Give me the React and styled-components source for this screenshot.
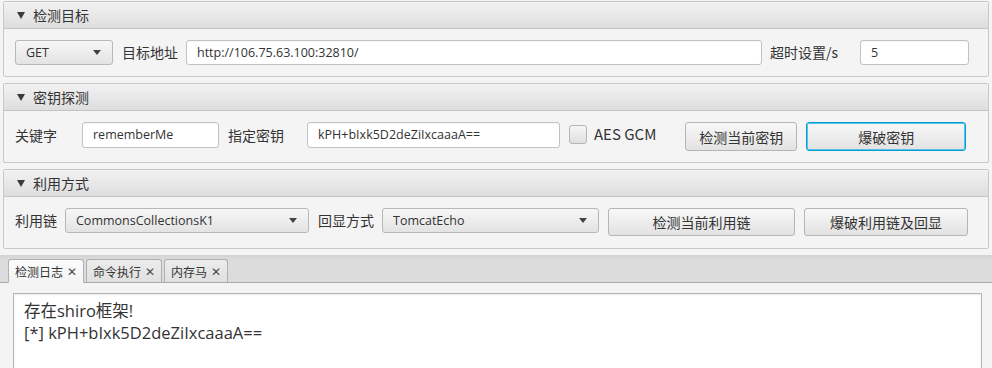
import React from "react";
import styled, { createGlobalStyle } from "styled-components";

const Global = createGlobalStyle`
  html, body { margin: 0; padding: 0; background: #f4f4f4; }
  body { font-family: "Noto Sans CJK SC", "Noto Sans", sans-serif; font-size: 14px; color: #333; }
  * { box-sizing: border-box; }
`;

const latin = `"Open Sans", "Noto Sans CJK SC", sans-serif`;

const Page = styled.div`
  width: 992px;
  height: 368px;
  overflow: hidden;
  display: flex;
  flex-direction: column;
  background: #f4f4f4;
`;

const Sections = styled.div`
  display: flex;
  flex-direction: column;
  gap: 6px;
  padding: 1px 3px 0 3px;
`;

const Pane = styled.section`
  border: 1px solid #c8c8c8;
  border-radius: 2px;
  background: #f4f4f4;
`;

const TitleBar = styled.div`
  height: 27px;
  display: flex;
  align-items: center;
  padding-left: 13px;
  gap: 8px;
  background: linear-gradient(to bottom, #f2f2f2, #dedede);
  border-bottom: 1px solid #c4c4c4;
  color: #333;
  font-size: 14px;
`;

const Arrow = styled.span`
  width: 0;
  height: 0;
  border-left: 4px solid transparent;
  border-right: 4px solid transparent;
  border-top: 7px solid #3a3a3a;
`;

const Content = styled.div`
  height: ${(p) => p.$h}px;
  display: flex;
  align-items: flex-start;
  padding: 11px 0 0 11px;
`;

const Label = styled.span`
  width: ${(p) => p.$w}px;
  margin-left: ${(p) => p.$ml || 0}px;
  height: ${(p) => p.$h || 25}px;
  line-height: ${(p) => p.$h || 25}px;
  white-space: nowrap;
  font-size: 14px;
  color: #333;
`;

const Field = styled.div`
  width: ${(p) => (p.$w ? p.$w + "px" : "auto")};
  flex: ${(p) => (p.$w ? "none" : "1")};
  margin-left: ${(p) => p.$ml || 0}px;
  height: ${(p) => p.$h || 25}px;
  line-height: ${(p) => (p.$h || 25) - 2}px;
  background: #fff;
  border: 1px solid #c2c2c2;
  border-radius: 3px;
  box-shadow: inset 0 1px 1px rgba(0, 0, 0, 0.04);
  padding-left: 10px;
  font-family: ${latin};
  font-size: 12.5px;
  color: #333;
  white-space: nowrap;
  overflow: hidden;
`;

const Combo = styled.div`
  width: ${(p) => p.$w}px;
  margin-left: ${(p) => p.$ml || 0}px;
  height: ${(p) => p.$h || 25}px;
  display: flex;
  align-items: center;
  justify-content: space-between;
  padding: 0 11px 0 10px;
  background: linear-gradient(to bottom, #f7f7f7, #e3e3e3);
  border: 1px solid #b8b8b8;
  border-radius: 3px;
  font-family: ${latin};
  font-size: 12.5px;
  color: #333;
`;

const ComboArrow = styled.span`
  width: 0;
  height: 0;
  border-left: 4.5px solid transparent;
  border-right: 4.5px solid transparent;
  border-top: 5px solid #444;
`;

const Button = styled.div`
  width: ${(p) => p.$w}px;
  margin-left: ${(p) => p.$ml || 0}px;
  height: ${(p) => p.$h || 28}px;
  display: flex;
  align-items: center;
  justify-content: center;
  background: linear-gradient(to bottom, #f8f8f8, #e2e2e2);
  border: 1px solid ${(p) => (p.$focus ? "#039ed3" : "#b5b5b5")};
  box-shadow: ${(p) => (p.$focus ? "inset 0 0 0 1px #5fbfe6" : "none")};
  border-radius: 3px;
  font-size: 14px;
  color: #333;
`;

const Check = styled.span`
  width: 18px;
  height: 19px;
  margin-left: ${(p) => p.$ml || 0}px;
  margin-top: 3px;
  border: 1px solid #b5b5b5;
  border-radius: 3px;
  background: linear-gradient(to bottom, #f6f6f6, #e0e0e0);
`;

const CheckText = styled.span`
  margin-left: 7px;
  height: 26px;
  line-height: 24px;
  font-size: 15px;
  color: #333;
`;

const TabPane = styled.div`
  margin-top: 6px;
  flex: 1;
  display: flex;
  flex-direction: column;
`;

const TabHeader = styled.div`
  height: 28px;
  display: flex;
  align-items: flex-end;
  gap: 2px;
  padding-left: 8px;
  background: linear-gradient(to bottom, #d2d2d2, #dcdcdc 4px, #dcdcdc);
  border-bottom: 1px solid #aaaaaa;
`;

const Tab = styled.div`
  height: 24px;
  display: flex;
  align-items: center;
  gap: 4px;
  padding: 0 6px 0 6px;
  margin-bottom: -1px;
  border: 1px solid #b0b0b0;
  border-bottom: ${(p) => (p.$active ? "1px solid #f4f4f4" : "1px solid #aaaaaa")};
  border-radius: 3px 3px 0 0;
  background: ${(p) =>
    p.$active
      ? "linear-gradient(to bottom, #fbfbfb, #f4f4f4)"
      : "linear-gradient(to bottom, #ececec, #e0e0e0)"};
  font-size: 12px;
  color: #333;
`;

const Close = styled.span`
  font-size: 12px;
  color: #4a4a4a;
  line-height: 1;
`;

const TabBody = styled.div`
  flex: 1;
  padding: 10px 10px 0 13px;
  background: #f4f4f4;
`;

const LogArea = styled.div`
  height: 100%;
  background: #fff;
  border: 1px solid #b4b4b4;
  border-bottom: none;
  box-shadow: inset 0 1px 2px rgba(0, 0, 0, 0.08);
  padding: 6px 10px;
  font-family: ${latin};
  font-size: 16.5px;
  line-height: 22px;
  color: #333;
`;

const Line = styled.div`
  white-space: nowrap;
`;

export default function App() {
  return (
    <Page>
      <Global />
      <Sections>
        <Pane>
          <TitleBar>
            <Arrow />
            检测目标
          </TitleBar>
          <Content $h={47}>
            <Combo $w={98}>
              GET
              <ComboArrow />
            </Combo>
            <Label $w={56} $ml={9}>目标地址</Label>
            <Field $ml={8}>http://106.75.63.100:32810/</Field>
            <Label $w={68} $ml={8}>超时设置/s</Label>
            <Field $w={109} $ml={22}>5</Field>
            <Label $w={19} />
          </Content>
        </Pane>
        <Pane>
          <TitleBar>
            <Arrow />
            密钥探测
          </TitleBar>
          <Content $h={51}>
            <Label $w={42} $h={26}>关键字</Label>
            <Field $w={137} $h={26} $ml={25}>rememberMe</Field>
            <Label $w={56} $h={26} $ml={9}>指定密钥</Label>
            <Field $w={253} $h={26} $ml={23}>kPH+bIxk5D2deZiIxcaaaA==</Field>
            <Check $ml={9} />
            <CheckText>AES GCM</CheckText>
            <Button $w={112} $h={29} $ml={29}>检测当前密钥</Button>
            <Button $w={160} $h={29} $ml={9} $focus>爆破密钥</Button>
          </Content>
        </Pane>
        <Pane>
          <TitleBar>
            <Arrow />
            利用方式
          </TitleBar>
          <Content $h={51}>
            <Label $w={42}>利用链</Label>
            <Combo $w={244} $ml={8}>
              CommonsCollectionsK1
              <ComboArrow />
            </Combo>
            <Label $w={56} $ml={9}>回显方式</Label>
            <Combo $w={217} $ml={8}>
              TomcatEcho
              <ComboArrow />
            </Combo>
            <Button $w={187} $ml={9}>检测当前利用链</Button>
            <Button $w={164} $ml={9}>爆破利用链及回显</Button>
          </Content>
        </Pane>
      </Sections>
      <TabPane>
        <TabHeader>
          <Tab $active>
            检测日志<Close>✕</Close>
          </Tab>
          <Tab>
            命令执行<Close>✕</Close>
          </Tab>
          <Tab>
            内存马<Close>✕</Close>
          </Tab>
        </TabHeader>
        <TabBody>
          <LogArea>
            <Line>存在shiro框架!</Line>
            <Line>[*] kPH+bIxk5D2deZiIxcaaaA==</Line>
          </LogArea>
        </TabBody>
      </TabPane>
    </Page>
  );
}
